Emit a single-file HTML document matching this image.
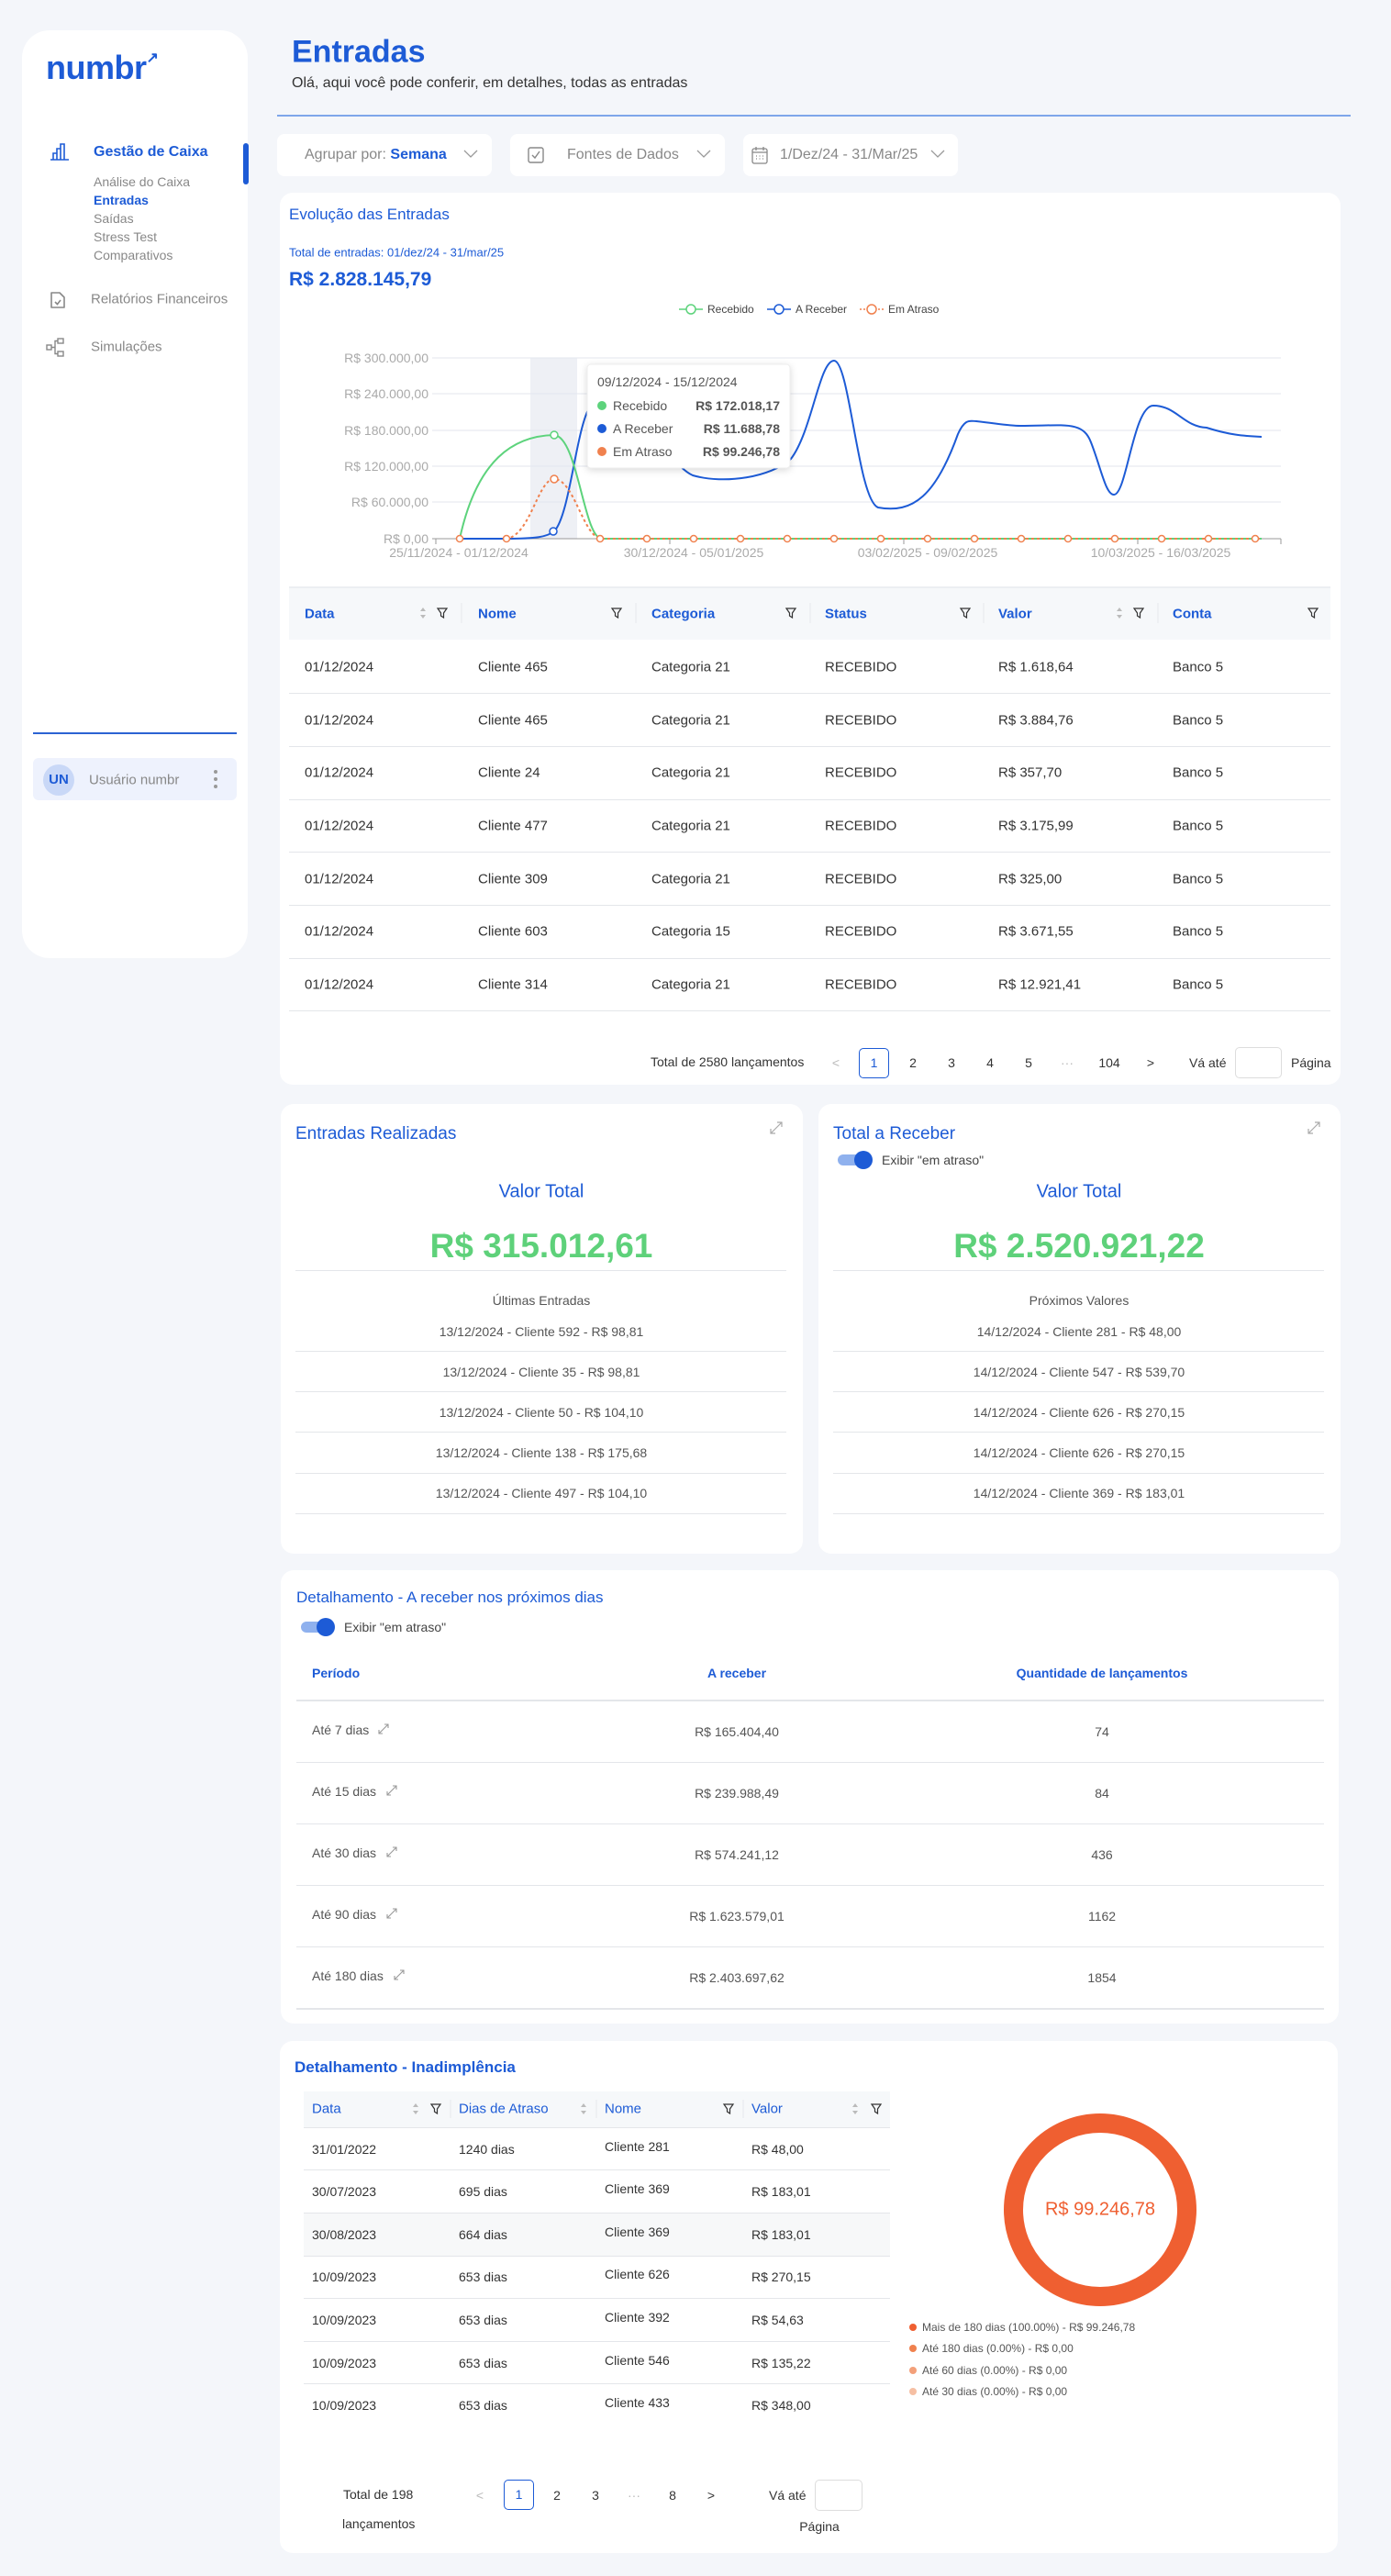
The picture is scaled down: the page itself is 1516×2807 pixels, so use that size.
<!DOCTYPE html>
<html><head><meta charset="utf-8"><style>
*{margin:0;padding:0;box-sizing:border-box}
body{width:1516px;height:2807px;background:#f4f6fa;font-family:"Liberation Sans",sans-serif;position:relative;overflow:hidden;color:#333}
.a{position:absolute;white-space:nowrap}
.card{position:absolute;background:#fff;border-radius:14px}
.b{color:#1d5bd6}
.g{color:#888}
.t15{font-size:15px}
.ln{position:absolute;height:1px;background:#e4e6ea}
.c{transform:translateX(-50%)}
.m{transform:translateY(-50%)}
.cm{transform:translate(-50%,-50%)}
</style></head><body>

<!-- Sidebar -->
<div class="card" style="left:24px;top:33px;width:246px;height:1011px;border-radius:30px"></div>
<div class="a m b" style="left:50px;top:74px;font-size:36px;font-weight:bold;letter-spacing:-0.5px;color:#1d5bd6">numbr<span style="font-size:16px;vertical-align:top">&#x2197;</span></div>
<div class="a" style="left:265px;top:156px;width:6px;height:45px;background:#1d5bd6;border-radius:3px"></div>
<svg class="a" style="left:54px;top:155px" width="22" height="20" viewBox="0 0 22 20"><path d="M1 19H21M4 19V12H8V19M8 19V7H12V19M12 19V2H16V19" fill="none" stroke="#1d5bd6" stroke-width="1.6"/></svg>
<div class="a m b" style="left:102px;top:166px;font-size:16px;font-weight:bold">Gestão de Caixa</div>
<div class="a m g" style="left:102px;top:198px;font-size:14px">Análise do Caixa</div>
<div class="a m b" style="left:102px;top:218px;font-size:14px;font-weight:bold">Entradas</div>
<div class="a m g" style="left:102px;top:238px;font-size:14px">Saídas</div>
<div class="a m g" style="left:102px;top:258px;font-size:14px">Stress Test</div>
<div class="a m g" style="left:102px;top:278px;font-size:14px">Comparativos</div>
<svg class="a" style="left:54px;top:317px" width="18" height="20" viewBox="0 0 18 20"><path d="M2 2H11L16 7V18H2Z" fill="none" stroke="#888" stroke-width="1.6" stroke-linejoin="round"/><path d="M6 12L8.5 14.5L12 10" fill="none" stroke="#888" stroke-width="1.6"/></svg>
<div class="a m g" style="left:99px;top:326px;font-size:15px">Relatórios Financeiros</div>
<svg class="a" style="left:50px;top:368px" width="22" height="22" viewBox="0 0 22 22"><rect x="1" y="8" width="5" height="5" fill="none" stroke="#888" stroke-width="1.4"/><rect x="13" y="1" width="6" height="5" fill="none" stroke="#888" stroke-width="1.4"/><rect x="13" y="15" width="6" height="5" fill="none" stroke="#888" stroke-width="1.4"/><path d="M6 10.5H10V3.5H13M10 10.5V17.5H13" fill="none" stroke="#888" stroke-width="1.4"/></svg>
<div class="a m g" style="left:99px;top:378px;font-size:15px">Simulações</div>
<div class="a" style="left:36px;top:798px;width:222px;height:2px;background:#2c63d3"></div>
<div class="a" style="left:36px;top:826px;width:222px;height:46px;background:#eef2fd;border-radius:6px"></div>
<div class="a" style="left:47px;top:833px;width:34px;height:34px;border-radius:17px;background:#c9d8f7;color:#1d5bd6;font-weight:bold;font-size:15px;text-align:center;line-height:34px">UN</div>
<div class="a m g" style="left:97px;top:850px;font-size:15px">Usuário numbr</div>
<div class="a" style="left:233px;top:839px;width:4px;height:4px;border-radius:2px;background:#999;box-shadow:0 8px 0 #999,0 16px 0 #999"></div>

<!-- Header -->
<div class="a m b" style="left:318px;top:57px;font-size:34px;font-weight:bold">Entradas</div>
<div class="a m" style="left:318px;top:91px;font-size:16px;color:#333">Olá, aqui você pode conferir, em detalhes, todas as entradas</div>
<div class="a" style="left:302px;top:125px;width:1170px;height:2px;background:#7ea6ea"></div>

<!-- Filters -->
<div class="card" style="left:302px;top:146px;width:234px;height:46px;border-radius:8px"></div>
<div class="a m" style="left:332px;top:169px;font-size:16px;color:#888">Agrupar por: <b class="b">Semana</b></div>
<svg class="a" style="left:505px;top:163px" width="16" height="10"><path d="M1 1L8 8L15 1" fill="none" stroke="#999" stroke-width="1.3"/></svg>
<div class="card" style="left:556px;top:146px;width:234px;height:46px;border-radius:8px"></div>
<svg class="a" style="left:575px;top:160px" width="18" height="18"><rect x="1" y="1" width="16" height="16" rx="2" fill="none" stroke="#888" stroke-width="1.4"/><path d="M5 9L8 12L13 5" fill="none" stroke="#888" stroke-width="1.4"/></svg>
<div class="a m g" style="left:618px;top:169px;font-size:16px">Fontes de Dados</div>
<svg class="a" style="left:759px;top:163px" width="16" height="10"><path d="M1 1L8 8L15 1" fill="none" stroke="#999" stroke-width="1.3"/></svg>
<div class="card" style="left:810px;top:146px;width:234px;height:46px;border-radius:8px"></div>
<svg class="a" style="left:819px;top:158px" width="18" height="22"><rect x="1" y="4" width="16" height="16" rx="2" fill="none" stroke="#888" stroke-width="1.3"/><path d="M1 8H17M5 2V6M13 2V6" stroke="#888" stroke-width="1.3"/><path d="M5 12h1M8.5 12h1M12 12h1M5 15h1M8.5 15h1M12 15h1" stroke="#888" stroke-width="1.3"/></svg>
<div class="a m g" style="left:850px;top:169px;font-size:16px">1/Dez/24 - 31/Mar/25</div>
<svg class="a" style="left:1014px;top:163px" width="16" height="10"><path d="M1 1L8 8L15 1" fill="none" stroke="#999" stroke-width="1.3"/></svg>

<!-- Chart card -->
<div class="card" style="left:305px;top:210px;width:1156px;height:972px"></div>
<div class="a m b" style="left:315px;top:234px;font-size:17px">Evolução das Entradas</div>
<div class="a m b" style="left:315px;top:275px;font-size:13px">Total de entradas: 01/dez/24 - 31/mar/25</div>
<div class="a m b" style="left:315px;top:305px;font-size:21px;font-weight:bold">R$ 2.828.145,79</div>

<svg class="a" style="left:0;top:0" width="1516" height="640">
 <g font-family="Liberation Sans" font-size="12" fill="#444">
  <line x1="740" y1="337" x2="766" y2="337" stroke="#5dd37c" stroke-width="1.5"/><circle cx="753" cy="337" r="5" fill="#fff" stroke="#5dd37c" stroke-width="1.5"/><text x="771" y="341">Recebido</text>
  <line x1="836" y1="337" x2="862" y2="337" stroke="#1d5bd6" stroke-width="1.5"/><circle cx="849" cy="337" r="5" fill="#fff" stroke="#1d5bd6" stroke-width="1.5"/><text x="867" y="341">A Receber</text>
  <line x1="937" y1="337" x2="963" y2="337" stroke="#f0814e" stroke-width="1.5" stroke-dasharray="2 2"/><circle cx="950" cy="337" r="5" fill="#fff" stroke="#f0814e" stroke-width="1.5"/><text x="968" y="341">Em Atraso</text>
 </g>
 <rect x="578" y="390" width="51" height="197" fill="#eef0f5"/>
 <g stroke="#e3e6ee" stroke-width="1">
  <line x1="471" y1="390" x2="1396" y2="390"/><line x1="471" y1="429" x2="1396" y2="429"/><line x1="471" y1="469" x2="1396" y2="469"/><line x1="471" y1="508" x2="1396" y2="508"/><line x1="471" y1="547" x2="1396" y2="547"/>
 </g>
 <line x1="471" y1="587" x2="1396" y2="587" stroke="#999"/>
 <g stroke="#999"><line x1="475" y1="587" x2="475" y2="593"/><line x1="730" y1="587" x2="730" y2="593"/><line x1="985" y1="587" x2="985" y2="593"/><line x1="1240" y1="587" x2="1240" y2="593"/><line x1="1396" y1="587" x2="1396" y2="593"/></g>
 <g font-family="Liberation Sans" font-size="14" fill="#aaa" text-anchor="end">
  <text x="467" y="395">R$ 300.000,00</text><text x="467" y="434">R$ 240.000,00</text><text x="467" y="474">R$ 180.000,00</text><text x="467" y="513">R$ 120.000,00</text><text x="467" y="552">R$ 60.000,00</text><text x="467" y="592">R$ 0,00</text>
 </g>
 <g font-family="Liberation Sans" font-size="14" fill="#aaa" text-anchor="middle">
  <text x="500" y="607">25/11/2024 - 01/12/2024</text><text x="756" y="607">30/12/2024 - 05/01/2025</text><text x="1011" y="607">03/02/2025 - 09/02/2025</text><text x="1265" y="607">10/03/2025 - 16/03/2025</text>
 </g>
 <path d="M501,587 L551,587 C585,587 596,585 604,579 C622,560 628,460 645,440 C680,410 725,505 755,518 C790,528 840,520 862,500 C885,470 893,393 909,393 C926,393 935,545 957,553 C995,560 1020,540 1044,473 C1052,455 1058,459 1064,459 C1090,462 1100,464 1112,464 C1160,464 1180,458 1189,482 C1200,510 1205,539 1214,539 C1228,539 1235,442 1257,442 C1282,442 1290,465 1315,466 C1340,474 1355,475 1375,476" fill="none" stroke="#1d5bd6" stroke-width="2"/>
 <path d="M501,587 C520,500 560,475 604,474 C630,476 636,587 656,587 L1375,587" fill="none" stroke="#5dd37c" stroke-width="2"/>
 <path d="M551,587 C578,585 586,522 604,522 C626,522 636,587 656,587 L1375,587" fill="none" stroke="#f0814e" stroke-width="2" stroke-dasharray="3 3"/>
 <g fill="#fff" stroke="#f0814e" stroke-width="1.5">
  <circle cx="501" cy="587" r="3.5"/><circle cx="552" cy="587" r="3.5"/><circle cx="654" cy="587" r="3.5"/><circle cx="705" cy="587" r="3.5"/><circle cx="756" cy="587" r="3.5"/><circle cx="807" cy="587" r="3.5"/><circle cx="858" cy="587" r="3.5"/><circle cx="909" cy="587" r="3.5"/><circle cx="960" cy="587" r="3.5"/><circle cx="1011" cy="587" r="3.5"/><circle cx="1062" cy="587" r="3.5"/><circle cx="1113" cy="587" r="3.5"/><circle cx="1164" cy="587" r="3.5"/><circle cx="1215" cy="587" r="3.5"/><circle cx="1266" cy="587" r="3.5"/><circle cx="1317" cy="587" r="3.5"/><circle cx="1368" cy="587" r="3.5"/>
  <circle cx="604" cy="522" r="4"/>
 </g>
 <circle cx="604" cy="474" r="4" fill="#fff" stroke="#5dd37c" stroke-width="1.5"/>
 <circle cx="603" cy="579" r="4" fill="#fff" stroke="#1d5bd6" stroke-width="1.5"/>
 <rect x="640" y="397" width="221" height="113" rx="4" fill="#fff" stroke="#eee" style="filter:drop-shadow(0 2px 4px rgba(0,0,0,.15))"/>
 <g font-family="Liberation Sans" font-size="14" fill="#555">
  <text x="651" y="421">09/12/2024 - 15/12/2024</text>
  <circle cx="656" cy="442" r="5" fill="#5dd37c"/><text x="668" y="447">Recebido</text><text x="850" y="447" text-anchor="end" font-weight="bold">R$ 172.018,17</text>
  <circle cx="656" cy="467" r="5" fill="#1d5bd6"/><text x="668" y="472">A Receber</text><text x="850" y="472" text-anchor="end" font-weight="bold">R$ 11.688,78</text>
  <circle cx="656" cy="492" r="5" fill="#f0814e"/><text x="668" y="497">Em Atraso</text><text x="850" y="497" text-anchor="end" font-weight="bold">R$ 99.246,78</text>
 </g>
</svg>

<!-- Main table -->
<div class="a" style="left:315px;top:639px;width:1135px;height:58px;background:#f6f8fa;border-top:2px solid #eceef2"></div>
<svg class="a" style="left:0;top:655px" width="1516" height="30">
 <g fill="none" stroke="#333" stroke-width="1.2">
  <path d="M477 8H487L483.5 13V18L480.5 16V13Z"/>
  <path d="M667 8H677L673.5 13V18L670.5 16V13Z"/><path d="M857 8H867L863.5 13V18L860.5 16V13Z"/><path d="M1047 8H1057L1053.5 13V18L1050.5 16V13Z"/><path d="M1236 8H1246L1242.5 13V18L1239.5 16V13Z"/><path d="M1426 8H1436L1432.5 13V18L1429.5 16V13Z"/>
 </g>
 <g fill="#bbb"><path d="M458 11L461 7L464 11Z"/><path d="M458 15L461 19L464 15Z"/><path d="M1217 11L1220 7L1223 11Z"/><path d="M1217 15L1220 19L1223 15Z"/></g>
 <g stroke="#e6e8ec"><line x1="503" y1="2" x2="503" y2="24"/><line x1="693" y1="2" x2="693" y2="24"/><line x1="883" y1="2" x2="883" y2="24"/><line x1="1072" y1="2" x2="1072" y2="24"/><line x1="1262" y1="2" x2="1262" y2="24"/></g>
</svg>
<div class="a m b t15" style="left:332px;top:669px;font-weight:bold">Data</div>
<div class="a m b t15" style="left:521px;top:669px;font-weight:bold">Nome</div>
<div class="a m b t15" style="left:710px;top:669px;font-weight:bold">Categoria</div>
<div class="a m b t15" style="left:899px;top:669px;font-weight:bold">Status</div>
<div class="a m b t15" style="left:1088px;top:669px;font-weight:bold">Valor</div>
<div class="a m b t15" style="left:1278px;top:669px;font-weight:bold">Conta</div>

<div style="position:absolute;left:0;top:0;font-size:15px;color:#333">
<div class="a m" style="left:332px;top:727px">01/12/2024</div><div class="a m" style="left:521px;top:727px">Cliente 465</div><div class="a m" style="left:710px;top:727px">Categoria 21</div><div class="a m" style="left:899px;top:727px">RECEBIDO</div><div class="a m" style="left:1088px;top:727px">R$ 1.618,64</div><div class="a m" style="left:1278px;top:727px">Banco 5</div>
<div class="a m" style="left:332px;top:785px">01/12/2024</div><div class="a m" style="left:521px;top:785px">Cliente 465</div><div class="a m" style="left:710px;top:785px">Categoria 21</div><div class="a m" style="left:899px;top:785px">RECEBIDO</div><div class="a m" style="left:1088px;top:785px">R$ 3.884,76</div><div class="a m" style="left:1278px;top:785px">Banco 5</div>
<div class="a m" style="left:332px;top:842px">01/12/2024</div><div class="a m" style="left:521px;top:842px">Cliente 24</div><div class="a m" style="left:710px;top:842px">Categoria 21</div><div class="a m" style="left:899px;top:842px">RECEBIDO</div><div class="a m" style="left:1088px;top:842px">R$ 357,70</div><div class="a m" style="left:1278px;top:842px">Banco 5</div>
<div class="a m" style="left:332px;top:900px">01/12/2024</div><div class="a m" style="left:521px;top:900px">Cliente 477</div><div class="a m" style="left:710px;top:900px">Categoria 21</div><div class="a m" style="left:899px;top:900px">RECEBIDO</div><div class="a m" style="left:1088px;top:900px">R$ 3.175,99</div><div class="a m" style="left:1278px;top:900px">Banco 5</div>
<div class="a m" style="left:332px;top:958px">01/12/2024</div><div class="a m" style="left:521px;top:958px">Cliente 309</div><div class="a m" style="left:710px;top:958px">Categoria 21</div><div class="a m" style="left:899px;top:958px">RECEBIDO</div><div class="a m" style="left:1088px;top:958px">R$ 325,00</div><div class="a m" style="left:1278px;top:958px">Banco 5</div>
<div class="a m" style="left:332px;top:1015px">01/12/2024</div><div class="a m" style="left:521px;top:1015px">Cliente 603</div><div class="a m" style="left:710px;top:1015px">Categoria 15</div><div class="a m" style="left:899px;top:1015px">RECEBIDO</div><div class="a m" style="left:1088px;top:1015px">R$ 3.671,55</div><div class="a m" style="left:1278px;top:1015px">Banco 5</div>
<div class="a m" style="left:332px;top:1073px">01/12/2024</div><div class="a m" style="left:521px;top:1073px">Cliente 314</div><div class="a m" style="left:710px;top:1073px">Categoria 21</div><div class="a m" style="left:899px;top:1073px">RECEBIDO</div><div class="a m" style="left:1088px;top:1073px">R$ 12.921,41</div><div class="a m" style="left:1278px;top:1073px">Banco 5</div>
</div>
<div class="ln" style="left:315px;top:755px;width:1135px"></div><div class="ln" style="left:315px;top:813px;width:1135px"></div><div class="ln" style="left:315px;top:871px;width:1135px"></div><div class="ln" style="left:315px;top:928px;width:1135px"></div><div class="ln" style="left:315px;top:986px;width:1135px"></div><div class="ln" style="left:315px;top:1044px;width:1135px"></div><div class="ln" style="left:315px;top:1101px;width:1135px"></div>

<div style="position:absolute;left:0;top:0;font-size:14px;color:#333">
<div class="a m" style="left:709px;top:1157px">Total de 2580 lançamentos</div>
<div class="a cm" style="left:911px;top:1158px;color:#bbb">&lt;</div>
<div class="a" style="left:936px;top:1142px;width:33px;height:33px;border:1px solid #1d5bd6;border-radius:5px;color:#1d5bd6;text-align:center;line-height:31px">1</div>
<div class="a cm" style="left:995px;top:1158px">2</div><div class="a cm" style="left:1037px;top:1158px">3</div><div class="a cm" style="left:1079px;top:1158px">4</div><div class="a cm" style="left:1121px;top:1158px">5</div>
<div class="a cm" style="left:1163px;top:1158px;color:#bbb">···</div><div class="a cm" style="left:1209px;top:1158px">104</div><div class="a cm" style="left:1254px;top:1158px">&gt;</div>
<div class="a m" style="left:1296px;top:1158px">Vá até</div>
<div class="a" style="left:1346px;top:1141px;width:51px;height:34px;border:1px solid #ddd;border-radius:5px"></div>
<div class="a m" style="left:1407px;top:1158px">Página</div>
</div>

<!-- Two cards -->
<div class="card" style="left:306px;top:1203px;width:569px;height:490px"></div>
<div class="card" style="left:892px;top:1203px;width:569px;height:490px"></div>
<div class="a m b" style="left:322px;top:1236px;font-size:19px">Entradas Realizadas</div>
<div class="a m b" style="left:908px;top:1236px;font-size:19px">Total a Receber</div>
<svg class="a" style="left:838px;top:1221px" width="16" height="16"><path d="M2 14L14 2M9 2H14V7M2 9V14H7" fill="none" stroke="#aaa" stroke-width="1.2"/></svg>
<svg class="a" style="left:1424px;top:1221px" width="16" height="16"><path d="M2 14L14 2M9 2H14V7M2 9V14H7" fill="none" stroke="#aaa" stroke-width="1.2"/></svg>
<div class="a" style="left:913px;top:1258px;width:36px;height:12px;border-radius:6px;background:#8fb1ee"></div>
<div class="a" style="left:931px;top:1254px;width:20px;height:20px;border-radius:10px;background:#1d5bd6"></div>
<div class="a m" style="left:961px;top:1264px;font-size:14px;color:#444">Exibir "em atraso"</div>

<div class="a cm b" style="left:590px;top:1299px;font-size:20px">Valor Total</div>
<div class="a cm b" style="left:1176px;top:1299px;font-size:20px">Valor Total</div>
<div class="a cm" style="left:590px;top:1358px;font-size:37px;font-weight:bold;color:#5ed17a">R$ 315.012,61</div>
<div class="a cm" style="left:1176px;top:1358px;font-size:37px;font-weight:bold;color:#5ed17a">R$ 2.520.921,22</div>
<div class="ln" style="left:322px;top:1384px;width:535px"></div><div class="ln" style="left:908px;top:1384px;width:535px"></div>
<div style="position:absolute;left:0;top:0;font-size:14px;color:#555">
<div class="a cm" style="left:590px;top:1417px">Últimas Entradas</div>
<div class="a cm" style="left:590px;top:1451px">13/12/2024 - Cliente 592 - R$ 98,81</div>
<div class="a cm" style="left:590px;top:1495px">13/12/2024 - Cliente 35 - R$ 98,81</div>
<div class="a cm" style="left:590px;top:1539px">13/12/2024 - Cliente 50 - R$ 104,10</div>
<div class="a cm" style="left:590px;top:1583px">13/12/2024 - Cliente 138 - R$ 175,68</div>
<div class="a cm" style="left:590px;top:1627px">13/12/2024 - Cliente 497 - R$ 104,10</div>
<div class="a cm" style="left:1176px;top:1417px">Próximos Valores</div>
<div class="a cm" style="left:1176px;top:1451px">14/12/2024 - Cliente 281 - R$ 48,00</div>
<div class="a cm" style="left:1176px;top:1495px">14/12/2024 - Cliente 547 - R$ 539,70</div>
<div class="a cm" style="left:1176px;top:1539px">14/12/2024 - Cliente 626 - R$ 270,15</div>
<div class="a cm" style="left:1176px;top:1583px">14/12/2024 - Cliente 626 - R$ 270,15</div>
<div class="a cm" style="left:1176px;top:1627px">14/12/2024 - Cliente 369 - R$ 183,01</div>
</div>
<div class="ln" style="left:322px;top:1472px;width:535px"></div><div class="ln" style="left:322px;top:1516px;width:535px"></div><div class="ln" style="left:322px;top:1560px;width:535px"></div><div class="ln" style="left:322px;top:1605px;width:535px"></div><div class="ln" style="left:322px;top:1649px;width:535px"></div>
<div class="ln" style="left:908px;top:1472px;width:535px"></div><div class="ln" style="left:908px;top:1516px;width:535px"></div><div class="ln" style="left:908px;top:1560px;width:535px"></div><div class="ln" style="left:908px;top:1605px;width:535px"></div><div class="ln" style="left:908px;top:1649px;width:535px"></div>

<!-- Detalhamento A receber -->
<div class="card" style="left:306px;top:1711px;width:1153px;height:494px"></div>
<div class="a m b" style="left:323px;top:1741px;font-size:17px">Detalhamento - A receber nos próximos dias</div>
<div class="a" style="left:328px;top:1767px;width:34px;height:12px;border-radius:6px;background:#8fb1ee"></div>
<div class="a" style="left:345px;top:1763px;width:20px;height:20px;border-radius:10px;background:#1d5bd6"></div>
<div class="a m" style="left:375px;top:1773px;font-size:14px;color:#444">Exibir "em atraso"</div>
<div class="a m b" style="left:340px;top:1823px;font-size:14px;font-weight:bold">Período</div>
<div class="a cm b" style="left:803px;top:1823px;font-size:14px;font-weight:bold">A receber</div>
<div class="a cm b" style="left:1201px;top:1823px;font-size:14px;font-weight:bold">Quantidade de lançamentos</div>
<div class="ln" style="left:323px;top:1852px;width:1120px;height:2px"></div>
<div style="position:absolute;left:0;top:0;font-size:14px;color:#555">
<div class="a m" style="left:340px;top:1885px">Até 7 dias</div><div class="a cm" style="left:803px;top:1887px">R$ 165.404,40</div><div class="a cm" style="left:1201px;top:1887px">74</div>
<div class="a m" style="left:340px;top:1952px">Até 15 dias</div><div class="a cm" style="left:803px;top:1954px">R$ 239.988,49</div><div class="a cm" style="left:1201px;top:1954px">84</div>
<div class="a m" style="left:340px;top:2019px">Até 30 dias</div><div class="a cm" style="left:803px;top:2021px">R$ 574.241,12</div><div class="a cm" style="left:1201px;top:2021px">436</div>
<div class="a m" style="left:340px;top:2086px">Até 90 dias</div><div class="a cm" style="left:803px;top:2088px">R$ 1.623.579,01</div><div class="a cm" style="left:1201px;top:2088px">1162</div>
<div class="a m" style="left:340px;top:2153px">Até 180 dias</div><div class="a cm" style="left:803px;top:2155px">R$ 2.403.697,62</div><div class="a cm" style="left:1201px;top:2155px">1854</div>
</div>
<svg class="a" style="left:0;top:1870px" width="500" height="300"><g fill="none" stroke="#999" stroke-width="1.1">
<path d="M413 19L423 9M419 9H423V13M413 15V19H417"/>
<path d="M422 86L432 76M428 76H432V80M422 82V86H426"/>
<path d="M422 153L432 143M428 143H432V147M422 149V153H426"/>
<path d="M422 220L432 210M428 210H432V214M422 216V220H426"/>
<path d="M430 287L440 277M436 277H440V281M430 283V287H434"/>
</g></svg>
<div class="ln" style="left:323px;top:1920px;width:1120px"></div><div class="ln" style="left:323px;top:1987px;width:1120px"></div><div class="ln" style="left:323px;top:2054px;width:1120px"></div><div class="ln" style="left:323px;top:2121px;width:1120px"></div><div class="ln" style="left:323px;top:2188px;width:1120px;height:2px"></div>

<!-- Inadimplência -->
<div class="card" style="left:305px;top:2224px;width:1153px;height:558px"></div>
<div class="a m b" style="left:321px;top:2253px;font-size:17px;font-weight:bold">Detalhamento - Inadimplência</div>
<div class="a" style="left:331px;top:2279px;width:639px;height:39px;background:#f6f8fa"></div>
<div class="a m b" style="left:340px;top:2298px;font-size:15px">Data</div>
<div class="a m b" style="left:500px;top:2298px;font-size:15px">Dias de Atraso</div>
<div class="a m b" style="left:659px;top:2298px;font-size:15px">Nome</div>
<div class="a m b" style="left:819px;top:2298px;font-size:15px">Valor</div>
<svg class="a" style="left:0;top:2286px" width="1000" height="26">
 <g fill="none" stroke="#333" stroke-width="1.2"><path d="M470 7H480L476.5 12V17L473.5 15V12Z"/><path d="M789 7H799L795.5 12V17L792.5 15V12Z"/><path d="M950 7H960L956.5 12V17L953.5 15V12Z"/></g>
 <g fill="#bbb"><path d="M450 10L453 6L456 10Z"/><path d="M450 14L453 18L456 14Z"/><path d="M633 10L636 6L639 10Z"/><path d="M633 14L636 18L639 14Z"/><path d="M929 10L932 6L935 10Z"/><path d="M929 14L932 18L935 14Z"/></g>
 <g stroke="#e6e8ec"><line x1="491" y1="2" x2="491" y2="22"/><line x1="650" y1="2" x2="650" y2="22"/><line x1="810" y1="2" x2="810" y2="22"/></g>
</svg>
<div class="a" style="left:331px;top:2412px;width:639px;height:46px;background:#f7f8f9"></div>
<div style="position:absolute;left:0;top:0;font-size:14px;color:#333">
<div class="a m" style="left:340px;top:2342px">31/01/2022</div><div class="a m" style="left:500px;top:2342px">1240 dias</div><div class="a m" style="left:659px;top:2339px">Cliente 281</div><div class="a m" style="left:819px;top:2342px">R$ 48,00</div>
<div class="a m" style="left:340px;top:2388px">30/07/2023</div><div class="a m" style="left:500px;top:2388px">695 dias</div><div class="a m" style="left:659px;top:2385px">Cliente 369</div><div class="a m" style="left:819px;top:2388px">R$ 183,01</div>
<div class="a m" style="left:340px;top:2435px">30/08/2023</div><div class="a m" style="left:500px;top:2435px">664 dias</div><div class="a m" style="left:659px;top:2432px">Cliente 369</div><div class="a m" style="left:819px;top:2435px">R$ 183,01</div>
<div class="a m" style="left:340px;top:2481px">10/09/2023</div><div class="a m" style="left:500px;top:2481px">653 dias</div><div class="a m" style="left:659px;top:2478px">Cliente 626</div><div class="a m" style="left:819px;top:2481px">R$ 270,15</div>
<div class="a m" style="left:340px;top:2528px">10/09/2023</div><div class="a m" style="left:500px;top:2528px">653 dias</div><div class="a m" style="left:659px;top:2525px">Cliente 392</div><div class="a m" style="left:819px;top:2528px">R$ 54,63</div>
<div class="a m" style="left:340px;top:2575px">10/09/2023</div><div class="a m" style="left:500px;top:2575px">653 dias</div><div class="a m" style="left:659px;top:2572px">Cliente 546</div><div class="a m" style="left:819px;top:2575px">R$ 135,22</div>
<div class="a m" style="left:340px;top:2621px">10/09/2023</div><div class="a m" style="left:500px;top:2621px">653 dias</div><div class="a m" style="left:659px;top:2618px">Cliente 433</div><div class="a m" style="left:819px;top:2621px">R$ 348,00</div>
</div>
<div class="ln" style="left:331px;top:2318px;width:639px"></div><div class="ln" style="left:331px;top:2364px;width:639px"></div><div class="ln" style="left:331px;top:2411px;width:639px"></div><div class="ln" style="left:331px;top:2458px;width:639px"></div><div class="ln" style="left:331px;top:2504px;width:639px"></div><div class="ln" style="left:331px;top:2551px;width:639px"></div><div class="ln" style="left:331px;top:2597px;width:639px"></div>

<div class="a" style="left:1094px;top:2303px;width:210px;height:210px;border-radius:50%;border:21px solid #ef5f31"></div>
<div class="a cm" style="left:1199px;top:2408px;font-size:20px;color:#ef5f31">R$ 99.246,78</div>
<div style="position:absolute;left:0;top:0;font-size:12px;color:#555">
<div class="a" style="left:991px;top:2532px;width:8px;height:8px;border-radius:4px;background:#ef5f31"></div><div class="a m" style="left:1005px;top:2536px">Mais de 180 dias (100.00%) - R$ 99.246,78</div>
<div class="a" style="left:991px;top:2555px;width:8px;height:8px;border-radius:4px;background:#f0814e"></div><div class="a m" style="left:1005px;top:2559px">Até 180 dias (0.00%) - R$ 0,00</div>
<div class="a" style="left:991px;top:2579px;width:8px;height:8px;border-radius:4px;background:#f3a07a"></div><div class="a m" style="left:1005px;top:2583px">Até 60 dias (0.00%) - R$ 0,00</div>
<div class="a" style="left:991px;top:2602px;width:8px;height:8px;border-radius:4px;background:#f6bfa3"></div><div class="a m" style="left:1005px;top:2606px">Até 30 dias (0.00%) - R$ 0,00</div>
</div>

<div style="position:absolute;left:0;top:0;font-size:14px;color:#333">
<div class="a m" style="left:374px;top:2718px">Total de 198</div>
<div class="a m" style="left:373px;top:2750px">lançamentos</div>
<div class="a cm" style="left:523px;top:2719px;color:#bbb">&lt;</div>
<div class="a" style="left:549px;top:2702px;width:33px;height:33px;border:1px solid #1d5bd6;border-radius:5px;color:#1d5bd6;text-align:center;line-height:31px">1</div>
<div class="a cm" style="left:607px;top:2719px">2</div><div class="a cm" style="left:649px;top:2719px">3</div>
<div class="a cm" style="left:691px;top:2719px;color:#bbb">···</div><div class="a cm" style="left:733px;top:2719px">8</div><div class="a cm" style="left:775px;top:2719px">&gt;</div>
<div class="a m" style="left:838px;top:2719px">Vá até</div>
<div class="a" style="left:888px;top:2702px;width:52px;height:34px;border:1px solid #ddd;border-radius:5px"></div>
<div class="a cm" style="left:893px;top:2753px">Página</div>
</div>

</body></html>
